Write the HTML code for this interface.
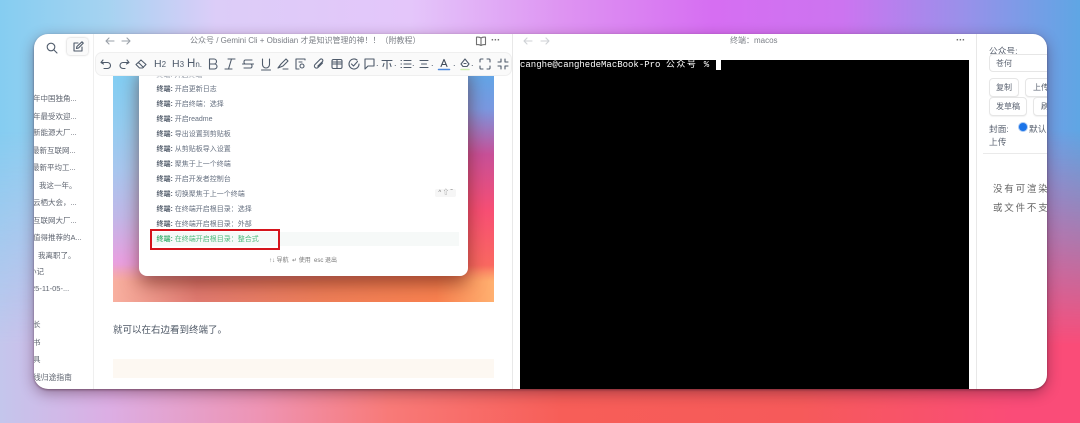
<!DOCTYPE html>
<html><head><meta charset="utf-8">
<style>
html,body{margin:0;padding:0;width:1080px;height:423px;overflow:hidden}
body{position:relative;font-family:"Liberation Sans","Noto Sans CJK SC",sans-serif;color:#5a6270;
background:linear-gradient(90deg,#85cdf1 0,#a6d3f1 10%,#dccdf8 20%,#e4c6fa 38%,#de94f2 52%,#d66ef2 66%,#cc74f0 78%,#9a90ea 89%,#5fa6e4 100%);}
#bot{position:absolute;left:0;top:0;width:1080px;height:423px;
background:linear-gradient(90deg,#c4c6ec 0,#dcaee4 10%,#ee94b4 24%,#f87a78 36%,#f75e58 52%,#f65a5a 74%,#fa4c78 94%,#fa4c78 100%);
-webkit-mask-image:linear-gradient(180deg,transparent 130px,#000 345px);mask-image:linear-gradient(180deg,transparent 130px,#000 345px)}
.abs,.abs *{box-sizing:border-box}
.abs{position:absolute}
.t{position:absolute;white-space:nowrap}
#win{left:34px;top:34px;width:1013px;height:355px;background:#fff;border-radius:14px;overflow:hidden;box-shadow:0 1px 2px rgba(60,20,40,.45),0 4px 14px rgba(60,20,40,.42);}
#inner{position:absolute;left:0;top:0;width:1013px;height:355px;filter:blur(.3px)}
.side{font-size:7.5px;color:#5f6570}
.cmd{position:absolute;left:122.500px;font-size:7px;color:#667080;white-space:nowrap}
.cmd b{font-weight:700;color:#56606e}
svg{position:absolute;fill:none;stroke:#4f5b6b;stroke-width:1.1;stroke-linecap:round;stroke-linejoin:round}
.btn{position:absolute;height:19px;background:#fff;border:1px solid #e6e6e6;border-radius:4px;font-size:8px;color:#5a6270;line-height:17px;text-align:center;box-shadow:0 1px 1px rgba(0,0,0,.05)}
.tb{position:absolute;font-size:10px;color:#4f5b6b;white-space:nowrap}
</style></head>
<body>
<div id="bot"></div>
<div class="abs" id="win"><div id="inner">
 <!-- sidebar -->
 <div class="abs" style="left:59px;top:0;width:1px;height:355px;background:#efefef"></div>
 <svg style="left:10px;top:6px" width="16" height="16" viewBox="0 0 16 16"><circle cx="7" cy="7" r="3.8"/><path d="M10 10l3 3"/></svg>
 <div class="abs" style="left:33px;top:4px;width:21px;height:17px;border-radius:3px;background:#fafafa;box-shadow:0 0 2px rgba(0,0,0,.25)"></div>
 <svg style="left:37px;top:6px" width="14" height="14" viewBox="0 0 14 14"><path d="M7 3H3v8h8V7"/><path d="M5.500 8.500l.4-2L11 1.800l1.300 1.300L7.500 8z"/></svg>
 <div class="t side" style="left:-1px;top:59px">年中国独角...</div>
 <div class="t side" style="left:-1px;top:77px">年最受欢迎...</div>
 <div class="t side" style="left:-1px;top:93px">新能源大厂...</div>
 <div class="t side" style="left:-2px;top:111px">最新互联网...</div>
 <div class="t side" style="left:-2px;top:128px">最新平均工...</div>
 <div class="t side" style="left:5px;top:146px">我这一年。</div>
 <div class="t side" style="left:-1px;top:163px">云栖大会，...</div>
 <div class="t side" style="left:-1px;top:181px">互联网大厂...</div>
 <div class="t side" style="left:-1px;top:198px">值得推荐的A...</div>
 <div class="t side" style="left:4px;top:216px">我离职了。</div>
 <div class="t side" style="left:-5px;top:232px">小记</div>
 <div class="t side" style="left:-3px;top:250px">25-11-05-...</div>
 <div class="t side" style="left:-1px;top:285px">长</div>
 <div class="t side" style="left:-1px;top:303px">书</div>
 <div class="t side" style="left:-1px;top:320px">具</div>
 <div class="t side" style="left:-1px;top:338px;font-size:7.800px">线归途指南</div>

 <!-- editor header -->
 <svg style="left:70px;top:1px" width="12" height="12" viewBox="0 0 12 12"><path style="stroke:#9aa0a8" d="M10 6H2M5 3L2 6l3 3"/></svg>
 <svg style="left:86px;top:1px" width="12" height="12" viewBox="0 0 12 12"><path style="stroke:#9aa0a8" d="M2 6h8M7 3l3 3-3 3"/></svg>
 <div class="t" style="left:156px;top:1px;font-size:8px;color:#7b7f86;line-height:12px">公众号 / Gemini Cli + Obsidian 才是知识管理的神！！（附教程）</div>
 <svg style="left:441px;top:1px" width="12" height="12" viewBox="0 0 12 12"><path style="stroke:#707070" d="M6 3C5 2.300 3 2 1.500 2.200v7.500C3 9.500 5 9.800 6 10.500c1-.7 3-1 4.500-.8V2.200C9 2 7 2.300 6 3zM6 3v7.500"/></svg>
 <div class="t" style="left:457px;top:1px;font-size:10px;color:#707070;font-weight:700;letter-spacing:-.3px">···</div>

 <!-- image in editor -->
 <div class="abs" style="left:79px;top:41px;width:381px;height:227px;overflow:hidden;
  background:linear-gradient(180deg,#82cdf2 0%,#94ccf0 22%,#a8c6ee 42%,#c0b8e8 62%,#e8a0e0 82%,#f4a0b0 95%,#f8b8a0 100%);">
  <div class="abs" style="left:0;top:0;width:381px;height:227px;
   background:linear-gradient(180deg,#62a5e6 0,#7a98e0 15%,#c85098 35%,#f84f74 60%,#fa6a60 85%,#ffb070 100%);
   -webkit-mask-image:linear-gradient(90deg,transparent 40%,#000 88%);mask-image:linear-gradient(90deg,transparent 40%,#000 88%)"></div>
  <div class="abs" style="left:0;top:190px;width:381px;height:37px;
   background:linear-gradient(90deg,#f8b0a0 0,#e07a70 22%,#ee7e58 55%,#f98250 85%,#ffb070 100%);
   -webkit-mask-image:linear-gradient(180deg,transparent,#000 45%);mask-image:linear-gradient(180deg,transparent,#000 45%)"></div>
  <div class="abs" style="left:26px;top:-10px;width:329px;height:211px;background:#fff;border-radius:8px;box-shadow:0 7px 18px rgba(90,25,15,.6)"></div>
 </div>
 <div class="cmd" style="top:36px;color:#8d94a0">终端: 开启终端</div>
 <div class="cmd" style="top:50px"><b>终端:</b> 开启更新日志</div>
 <div class="cmd" style="top:65px"><b>终端:</b> 开启终端：选择</div>
 <div class="cmd" style="top:80px"><b>终端:</b> 开启readme</div>
 <div class="cmd" style="top:95px"><b>终端:</b> 导出设置到剪贴板</div>
 <div class="cmd" style="top:110px"><b>终端:</b> 从剪贴板导入设置</div>
 <div class="cmd" style="top:125px"><b>终端:</b> 聚焦于上一个终端</div>
 <div class="cmd" style="top:140px"><b>终端:</b> 开启开发者控制台</div>
 <div class="cmd" style="top:155px"><b>终端:</b> 切换聚焦于上一个终端</div>
 <div class="abs" style="left:401px;top:155px;width:21px;height:8px;background:#f6f6f6;border-radius:2px;font-size:6px;line-height:8px;color:#777;text-align:center">^ ⇧ ˜</div>
 <div class="cmd" style="top:170px"><b>终端:</b> 在终端开启根目录：选择</div>
 <div class="cmd" style="top:185px"><b>终端:</b> 在终端开启根目录：外部</div>
 <div class="abs" style="left:117px;top:198px;width:308px;height:14px;background:#f6f9f8"></div>
 <div class="cmd" style="top:200px;color:#4fba7e"><b style="color:#45b577">终端:</b> 在终端开启根目录：整合式</div>
 <div class="abs" style="left:116px;top:195px;width:130px;height:21px;border:2px solid #d5141c"></div>
 <div class="t" style="left:235px;top:221px;font-size:6px;color:#777">↑↓ 导航 &nbsp;↵ 使用 &nbsp;esc 退出</div>

 <!-- paragraph and callout -->
 <div class="t" style="left:79px;top:289px;font-size:9.500px;color:#4e5866;line-height:15px">就可以在右边看到终端了。</div>
 <div class="abs" style="left:79px;top:325px;width:381px;height:19px;background:#fdf8f2"></div>

 <!-- toolbar -->
 <div class="abs" style="left:61px;top:18px;width:417px;height:24px;background:#fafafa;border:1px solid #efefef;border-radius:7px"></div>
 <svg style="left:64px;top:22px" width="16" height="16" viewBox="0 0 16 16"><path d="M5 4L3 6.500 5.500 8M3 6.500h6.500a3 3 0 0 1 0 6H6"/></svg>
 <svg style="left:82px;top:22px" width="16" height="16" viewBox="0 0 16 16"><path d="M11 4l2 2.500L10.500 8M13 6.500H7a3 3 0 0 0 0 6h2"/></svg>
 <svg style="left:99px;top:22px" width="16" height="16" viewBox="0 0 16 16"><path d="M3 8.500l5-4.500 5 4.500-3.500 3.500h-3zM5.500 6.500l5 5"/></svg>
 <div class="tb" style="left:120px;top:24px;font-size:10.500px;line-height:13px">H<span style="font-size:8px">2</span></div>
 <div class="tb" style="left:138px;top:24px;font-size:10.500px;line-height:13px">H<span style="font-size:8px">3</span></div>
 <div class="tb" style="left:153px;top:24px;font-size:11.500px;line-height:13px">H<span style="font-size:8px">n.</span></div>
 <svg style="left:171px;top:22px" width="16" height="16" viewBox="0 0 16 16"><path d="M4.500 3h4.500a2.400 2.400 0 0 1 0 5H4.500zM4.500 8h5a2.500 2.500 0 0 1 0 5h-5z"/></svg>
 <svg style="left:188px;top:22px" width="16" height="16" viewBox="0 0 16 16"><path d="M6 3h7M3 13h7M9.500 3l-3 10"/></svg>
 <svg style="left:206px;top:22px" width="16" height="16" viewBox="0 0 16 16"><path d="M12 4H5.500c-2 0-2 4 0 4h5c2 0 2 4 0 4H4M2.500 8h11"/></svg>
 <svg style="left:224px;top:22px" width="16" height="16" viewBox="0 0 16 16"><path d="M4.500 3v5.500a3.500 3.500 0 0 0 7 0V3M3.500 14h9"/></svg>
 <svg style="left:241px;top:22px" width="16" height="16" viewBox="0 0 16 16"><path d="M3 12l3-4 5-5 2 2-5 5-5 2zM8 13h5"/></svg>
 <svg style="left:258px;top:22px" width="16" height="16" viewBox="0 0 16 16"><path d="M13 4V3H4v10h3M10 8a2 2 0 1 1 0 4 2 2 0 0 1 0-4zM7 6h3"/></svg>
 <svg style="left:277px;top:22px" width="16" height="16" viewBox="0 0 16 16"><path d="M11.500 7l-4.500 4.500a2 2 0 0 1-3-3L9 3.500a1.500 1.500 0 0 1 2.500 2L6.800 10.200"/></svg>
 <svg style="left:295px;top:22px" width="16" height="16" viewBox="0 0 16 16"><rect x="3" y="3.500" width="10" height="9" rx="1.500"/><path d="M3 8h10M8 3.500v9M3 6h10"/></svg>
 <svg style="left:312px;top:22px" width="16" height="16" viewBox="0 0 16 16"><path d="M13 8a5 5 0 1 1-2-4M5.500 8l2 2 4-4.500"/></svg>
 <svg style="left:328px;top:22px" width="16" height="16" viewBox="0 0 16 16"><path d="M3 3h9v7H6l-3 3z"/></svg>
 <div class="tb" style="left:342px;top:24px;font-size:9px">.</div>
 <svg style="left:345px;top:22px" width="16" height="16" viewBox="0 0 16 16"><path d="M3 4.500h10M8 4.500V13M5 7.500l-1 3M11 7.500l1 3"/></svg>
 <div class="tb" style="left:360px;top:24px;font-size:9px">.</div>
 <svg style="left:364px;top:22px" width="16" height="16" viewBox="0 0 16 16"><path d="M6 4.500h7M6 8h7M6 11.500h7M3 4.500h.5M3 8h.5M3 11.500h.5"/></svg>
 <div class="tb" style="left:378px;top:24px;font-size:9px">.</div>
 <svg style="left:382px;top:22px" width="16" height="16" viewBox="0 0 16 16"><path d="M4 4.500h8M5.500 8h5M4 11.500h8"/></svg>
 <div class="tb" style="left:397px;top:24px;font-size:9px">.</div>
 <svg style="left:402px;top:22px" width="16" height="16" viewBox="0 0 16 16"><path d="M5 10.500L8 3.500l3 7M6 8.500h4" style="stroke:#444e5c"/><path d="M2.500 13.500h11" style="stroke:#4a86dc;stroke-width:1.500"/></svg>
 <div class="tb" style="left:419px;top:24px;font-size:9px">.</div>
 <svg style="left:423px;top:22px" width="16" height="16" viewBox="0 0 16 16"><path d="M8 3l4 5-2 2.500H6L4 8z M7 7.500h2"/><path d="M4 13.500h8" style="stroke:#cfeeb0;stroke-width:1.500"/></svg>
 <div class="tb" style="left:437px;top:24px;font-size:9px">.</div>
 <svg style="left:443px;top:22px" width="16" height="16" viewBox="0 0 16 16"><path d="M3 6V4a1 1 0 0 1 1-1h2M10 3h2a1 1 0 0 1 1 1v2M13 10v2a1 1 0 0 1-1 1h-2M6 13H4a1 1 0 0 1-1-1v-2"/></svg>
 <svg style="left:461px;top:22px" width="16" height="16" viewBox="0 0 16 16"><path d="M3 6h3V3M10 3v3h3M13 10h-3v3M6 13v-3H3"/></svg>

 <!-- pane divider -->
 <div class="abs" style="left:478px;top:0;width:1px;height:355px;background:#e8e8e8"></div>

 <!-- terminal -->
 <svg style="left:488px;top:1px" width="12" height="12" viewBox="0 0 12 12"><path style="stroke:#cfd2d6" d="M10 6H2M5 3L2 6l3 3"/></svg>
 <svg style="left:505px;top:1px" width="12" height="12" viewBox="0 0 12 12"><path style="stroke:#cfd2d6" d="M2 6h8M7 3l3 3-3 3"/></svg>
 <div class="t" style="left:696px;top:1px;font-size:8px;color:#7b7f86;line-height:12px">终端：macos</div>
 <div class="t" style="left:922px;top:1px;font-size:10px;color:#707070;font-weight:700;letter-spacing:-.3px">···</div>
 <div class="abs" style="left:486px;top:26px;width:449px;height:329px;background:#000"></div>
 <div class="t" style="left:486px;top:25px;font-family:'Liberation Mono','Noto Sans CJK SC',monospace;font-size:9px;line-height:12px;color:#fff">canghe@canghedeMacBook-Pro <span style="letter-spacing:1.500px">公众号</span> <span style="margin-left:1px">%</span></div>
 <div class="abs" style="left:682px;top:26px;width:5px;height:10px;background:#fff"></div>

 <!-- right panel -->
 <div class="abs" style="left:942px;top:0;width:1px;height:355px;background:#e8e8e8"></div>
 <div class="t" style="left:955px;top:10px;font-size:8.700px;color:#5a6270">公众号:</div>
 <div class="abs" style="left:955px;top:20px;width:70px;height:18px;border:1px solid #e6e6e6;border-radius:4px;background:#fff"></div>
 <div class="t" style="left:962px;top:24px;font-size:8px;color:#5a6270">苍何</div>
 <div class="btn" style="left:955px;top:44px;width:30px">复制</div>
 <div class="btn" style="left:991px;top:44px;width:40px;text-align:left;padding-left:7px">上传</div>
 <div class="btn" style="left:955px;top:63px;width:38px">发草稿</div>
 <div class="btn" style="left:999px;top:63px;width:30px;text-align:left;padding-left:7px">刷</div>
 <div class="t" style="left:955px;top:88px;font-size:8.700px;color:#5a6270">封面:</div>
 <div class="abs" style="left:984.500px;top:88.500px;width:8px;height:8px;border-radius:50%;background:#1a73e8;box-shadow:0 0 0 1px #a9c9f4"></div>
 <div class="t" style="left:995px;top:88px;font-size:8.700px;color:#5a6270">默认</div>
 <div class="t" style="left:955px;top:101px;font-size:8.700px;color:#5a6270">上传</div>
 <div class="abs" style="left:949px;top:119px;width:64px;height:1px;background:#eaeaea"></div>
 <div class="t" style="left:959px;top:147px;font-size:9.500px;color:#666;letter-spacing:1.800px">没有可渲染</div>
 <div class="t" style="left:959px;top:166px;font-size:9.500px;color:#666;letter-spacing:1.800px">或文件不支</div>
</div></div>
</body></html>
